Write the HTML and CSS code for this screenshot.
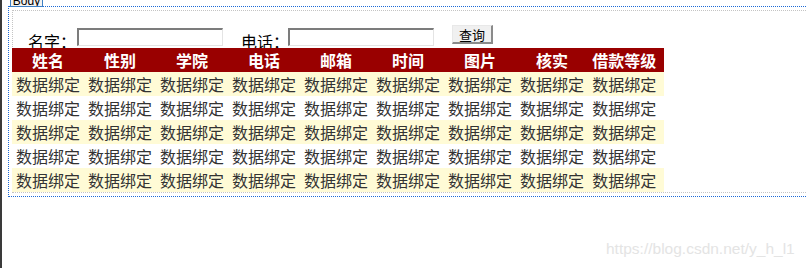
FILE: index.html
```html
<!DOCTYPE html>
<html lang="zh-CN">
<head>
<meta charset="utf-8">
<title>GridView</title>
<link rel="stylesheet" href="styles.css">
</head>
<body>
<div class="page">
  <div class="rail"></div>
  <div class="canvas">
    <div class="design">
      <span class="tag">Body</span>
      <div class="form-area">
        <div class="search">
          <span class="label">名字：</span>
          <input class="field" type="text">
          <span class="label label-gap">电话：</span>
          <input class="field" type="text">
          <button class="btn" type="button">查询</button>
        </div>
        <table class="grid">
          <thead>
            <tr><th>姓名</th><th>性别</th><th>学院</th><th>电话</th><th>邮箱</th><th>时间</th><th>图片</th><th>核实</th><th>借款等级</th></tr>
          </thead>
          <tbody>
            <tr class="odd"><td>数据绑定</td><td>数据绑定</td><td>数据绑定</td><td>数据绑定</td><td>数据绑定</td><td>数据绑定</td><td>数据绑定</td><td>数据绑定</td><td>数据绑定</td></tr>
            <tr class="even"><td>数据绑定</td><td>数据绑定</td><td>数据绑定</td><td>数据绑定</td><td>数据绑定</td><td>数据绑定</td><td>数据绑定</td><td>数据绑定</td><td>数据绑定</td></tr>
            <tr class="odd"><td>数据绑定</td><td>数据绑定</td><td>数据绑定</td><td>数据绑定</td><td>数据绑定</td><td>数据绑定</td><td>数据绑定</td><td>数据绑定</td><td>数据绑定</td></tr>
            <tr class="even"><td>数据绑定</td><td>数据绑定</td><td>数据绑定</td><td>数据绑定</td><td>数据绑定</td><td>数据绑定</td><td>数据绑定</td><td>数据绑定</td><td>数据绑定</td></tr>
            <tr class="odd"><td>数据绑定</td><td>数据绑定</td><td>数据绑定</td><td>数据绑定</td><td>数据绑定</td><td>数据绑定</td><td>数据绑定</td><td>数据绑定</td><td>数据绑定</td></tr>
          </tbody>
        </table>
      </div>
    </div>
  </div>
  <div class="watermark">https://blog.csdn.net/y_h_l1</div>
</div>
</body>
</html>
```
FILE: styles.css
```css
html, body {
  margin: 0;
  padding: 0;
  background: #ffffff;
}

.page {
  position: relative;
  display: flex;
  width: 806px;
  height: 268px;
  overflow: hidden;
  font-family: "Noto Sans CJK SC", "Liberation Sans", sans-serif;
}

.rail {
  width: 2px;
  flex: none;
  background: #3a3a3a;
}

.canvas {
  flex: 1;
  min-width: 0;
}

.design {
  position: relative;
  margin: 6px 0 0 6px;
  padding: 3px 0 3px 3px;
  border-top: 1px dotted #1c6ad6;
  border-left: 1px dotted #1c6ad6;
  border-bottom: 1px dotted #1c6ad6;
}

.tag {
  position: absolute;
  left: 1px;
  top: -15px;
  width: 31px;
  height: 13px;
  border: 1px solid #3d7fc4;
  background: #f2f2f2;
  font-family: "Liberation Sans", sans-serif;
  font-size: 12px;
  line-height: 17px;
  color: #000;
  text-align: center;
  overflow: hidden;
}

.form-area {
  border-top: 1px dotted #c4c4c4;
  border-left: 1px dotted #c4c4c4;
  border-bottom: 1px dotted #c4c4c4;
}

.search {
  display: flex;
  align-items: flex-start;
  height: 37px;
  padding-left: 15px;
  overflow: hidden;
}

.label {
  margin-top: 21px;
  font-size: 16px;
  line-height: 18px;
  color: #000;
  white-space: nowrap;
}

.label-gap {
  margin-left: 18px;
  margin-right: -2px;
}

.field {
  box-sizing: border-box;
  width: 146px;
  height: 18px;
  margin: 17px 0 0 1px;
  padding: 0;
  border-style: solid;
  border-width: 2px 1px 1px 2px;
  border-color: #7c7c7c #e4e4e4 #e4e4e4 #7c7c7c;
  background: #fff;
}

.btn {
  box-sizing: border-box;
  width: 41px;
  height: 19px;
  margin: 14px 0 0 18px;
  padding: 0;
  border-style: solid;
  border-width: 1px 2px 2px 1px;
  border-color: #e8e8e8 #8a8a8a #8a8a8a #e8e8e8;
  background: #f0f0f0;
  font-family: "Noto Sans CJK SC", sans-serif;
  font-size: 13px;
  line-height: 15px;
  color: #000;
}

.grid {
  margin-left: -1px;
  border-collapse: collapse;
  border-spacing: 0;
}

.grid th,
.grid td {
  padding: 4px;
  width: 64px;
  font-size: 16px;
  line-height: 16px;
  height: 16px;
  white-space: nowrap;
}

.grid th:last-child,
.grid td:last-child {
  padding-right: 8px;
}

.grid th {
  background: #990000;
  color: #ffffff;
  font-weight: bold;
  text-align: center;
}

.grid td {
  color: #333333;
  text-align: left;
}

.grid tr.odd td {
  background: #fffbd6;
}

.grid tr.even td {
  background: #ffffff;
}

.watermark {
  position: absolute;
  left: 606px;
  top: 240px;
  font-family: "Liberation Sans", Arial, sans-serif;
  font-size: 15.5px;
  line-height: 18px;
  color: #e4e4e4;
  white-space: nowrap;
}
```
